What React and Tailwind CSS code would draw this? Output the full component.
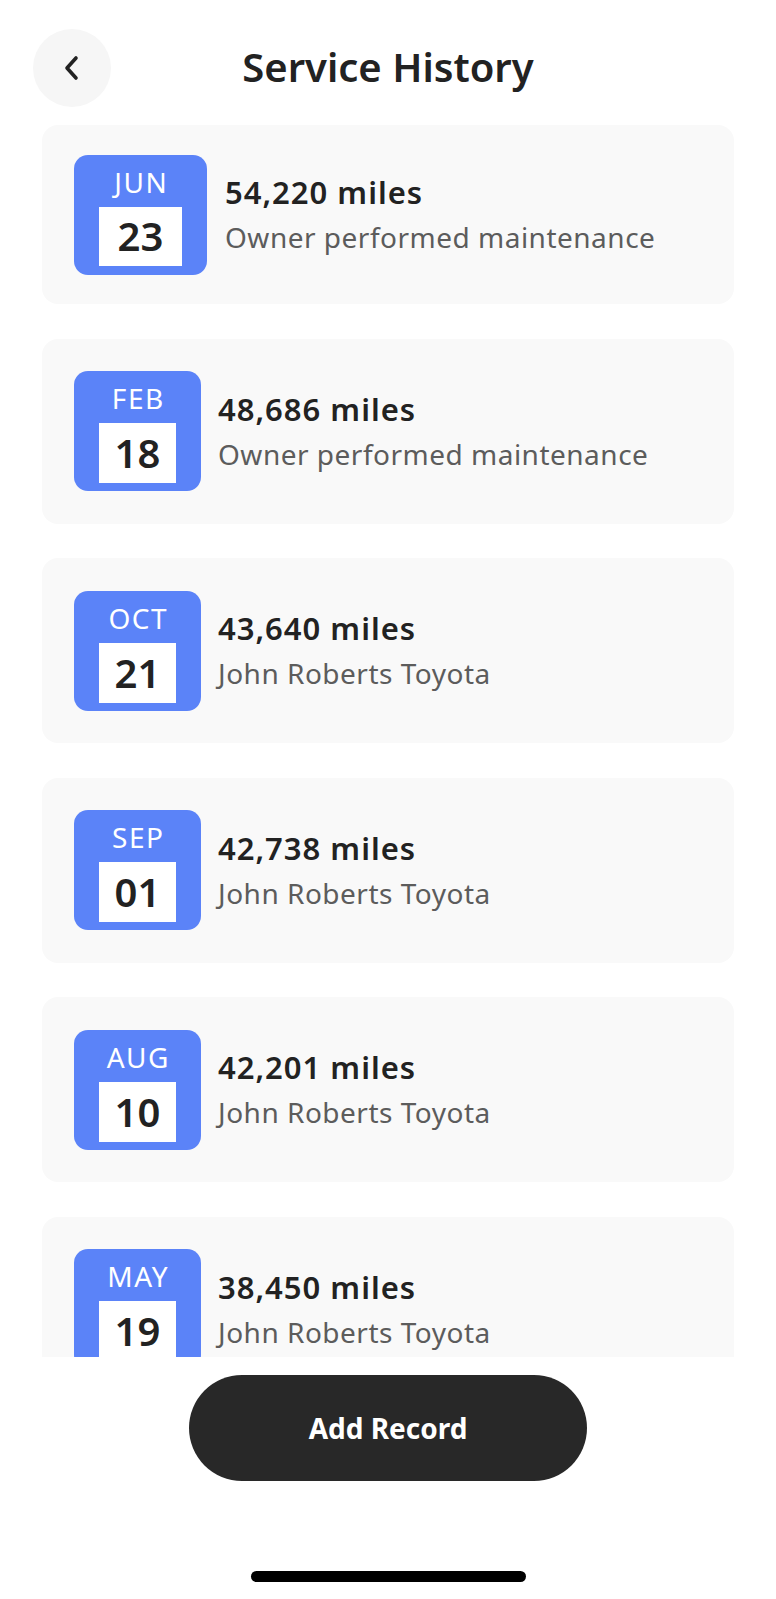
const RECORDS = [
  { month: 'JUN', day: '23', miles: '54,220 miles', place: 'Owner performed maintenance', first: true },
  { month: 'FEB', day: '18', miles: '48,686 miles', place: 'Owner performed maintenance' },
  { month: 'OCT', day: '21', miles: '43,640 miles', place: 'John Roberts Toyota' },
  { month: 'SEP', day: '01', miles: '42,738 miles', place: 'John Roberts Toyota' },
  { month: 'AUG', day: '10', miles: '42,201 miles', place: 'John Roberts Toyota' },
  { month: 'MAY', day: '19', miles: '38,450 miles', place: 'John Roberts Toyota' },
];

function DateBadge({ month, day, wide }) {
  return (
    <div
      className={`flex flex-col items-center shrink-0 h-[120px] rounded-[14px] bg-[#5b83f8] ${
        wide ? 'w-[133px]' : 'w-[127px]'
      }`}
    >
      <div className="h-[52px] flex items-center justify-center text-white text-[28px] tracking-[1.5px] leading-none pt-[2px] pl-[1.5px]">
        {month}
      </div>
      <div
        className={`bg-white flex items-center justify-center text-[40px] font-semibold text-[#222] leading-none ${
          wide ? 'w-[83px] h-[59px]' : 'w-[77px] h-[60px]'
        }`}
      >
        {day}
      </div>
    </div>
  );
}

function RecordCard({ record }) {
  return (
    <div
      className={`shrink-0 flex items-center pl-[32px] rounded-[16px] bg-[#f9f9f9] ${
        record.first ? 'h-[179px] gap-[18px]' : 'h-[185px] gap-[17px]'
      }`}
    >
      <DateBadge month={record.month} day={record.day} wide={record.first} />
      <div className="flex flex-col">
        <span className="text-[31px] tracking-[1px] leading-[38px] font-semibold text-[#222]">
          {record.miles}
        </span>
        <span className="text-[28px] tracking-[0.5px] leading-[38px] mt-[7px] text-[#5c5c5c]">
          {record.place}
        </span>
      </div>
    </div>
  );
}

export default function App() {
  return (
    <div className="w-[776px] h-[1599px] bg-white flex flex-col font-['Noto_Sans',sans-serif] overflow-hidden">
      {/* header */}
      <div className="grid grid-cols-[78px_1fr_78px] items-center px-[33px] pt-[29px]">
        <button className="w-[78px] h-[78px] rounded-full bg-[#f6f6f6] flex items-center justify-center text-[#222]">
          <svg width="20" height="30" viewBox="0 0 20 30" fill="none">
            <path d="M14 5 L5 15 L14 25" stroke="currentColor" strokeWidth="3.6" strokeLinecap="round" strokeLinejoin="round" />
          </svg>
        </button>
        <h1 className="text-center text-[40px] font-semibold text-[#222] leading-none pb-[2px]">
          Service History
        </h1>
        <div />
      </div>

      {/* list */}
      <div className="mt-[18px] h-[1232px] overflow-hidden px-[42px] flex flex-col gap-[34.5px]">
        {RECORDS.map((r) => (
          <RecordCard key={r.month + r.day} record={r} />
        ))}
      </div>

      {/* add button */}
      <div className="flex justify-center mt-[18px]">
        <button className="w-[398px] h-[106px] rounded-full bg-[#282828] text-white text-[28px] font-bold">
          Add Record
        </button>
      </div>

      <div className="flex justify-center mt-[90px]">
        <div className="w-[275px] h-[11px] rounded-full bg-black" />
      </div>
    </div>
  );
}
